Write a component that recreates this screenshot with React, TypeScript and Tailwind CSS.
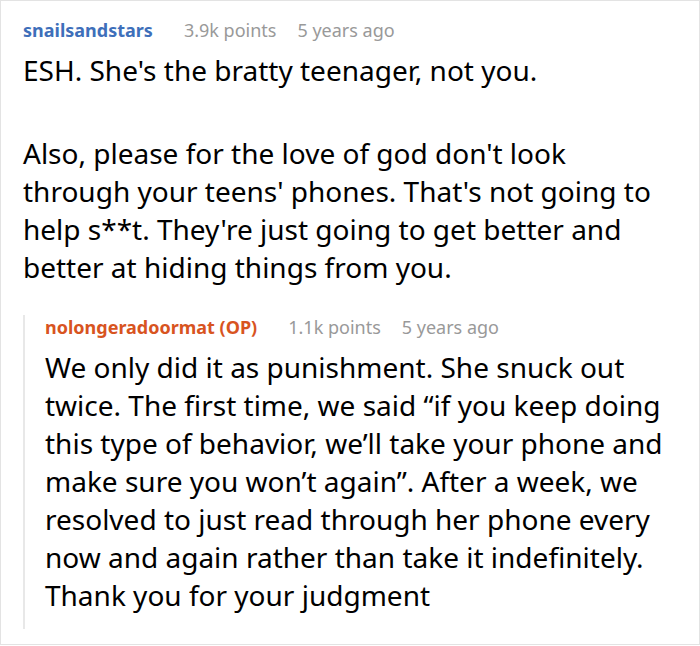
export default function App() {
  return (
    <div className="w-[700px] h-[645px] bg-white border border-[#e3e3e3] overflow-hidden" style={{ fontFamily: '"Noto Sans", "Open Sans", sans-serif' }}>
      <div className="pl-[22px] pr-4 pt-[17px]">
        <div className="flex items-baseline gap-[31px] h-[24px] leading-[24px]">
          <span className="text-[18px] font-bold text-[#3e6fba]">snailsandstars</span>
          <span className="text-[18px] text-[#999999] flex gap-[21px]">
            <span>3.9k points</span>
            <span>5 years ago</span>
          </span>
        </div>
        <div className="text-[28px] leading-[38px] text-black mt-[9px] pr-[22px]">
          <p>ESH. She's the bratty teenager, not you.</p>
          <p className="mt-[45px]">
            Also, please for the love of god don't look through your teens' phones. That's not going to help s**t. They're just going to get better and better at hiding things from you.
          </p>
        </div>
        <div className="mt-[29px] border-l-2 border-[#e8e8e8] pl-[20px] pb-[15px]">
          <div className="flex items-baseline gap-[31px] h-[24px] leading-[24px]">
            <span className="text-[18px] font-bold text-[#d8541f]">nolongeradoormat (OP)</span>
            <span className="text-[18px] text-[#999999] flex gap-[21px]">
              <span>1.1k points</span>
              <span>5 years ago</span>
            </span>
          </div>
          <p className="text-[28px] leading-[38px] text-black mt-[9px]">
            We only did it as punishment. She snuck out twice. The first time, we said “if you keep doing this type of behavior, we’ll take your phone and make sure you won’t again”. After a week, we resolved to just read through her phone every now and again rather than take it indefinitely. Thank you for your judgment
          </p>
        </div>
      </div>
    </div>
  )
}
